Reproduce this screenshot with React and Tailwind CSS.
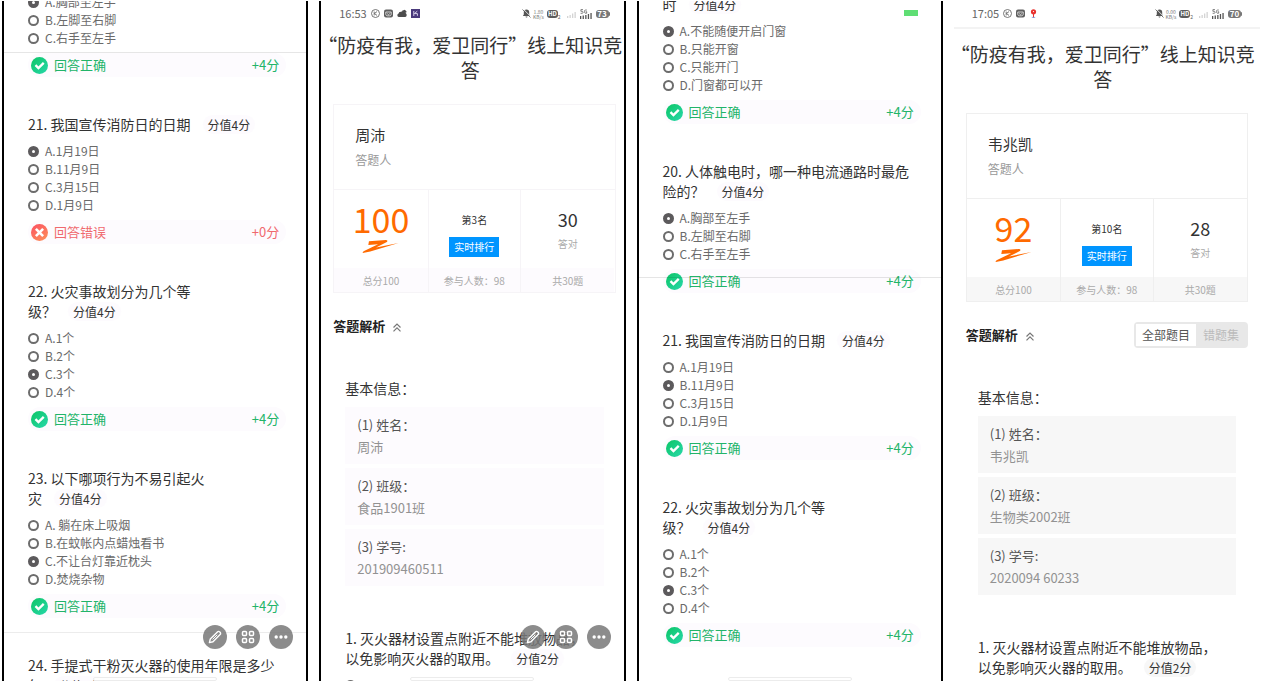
import React from "react";

const lilac = {
  soft: "bg-[#fdfbfe]",
  line: "border-[#f6f4f7]",
};
const gray = {
  soft: "bg-[#f7f7f7]",
  line: "border-[#efefef]",
};

function CheckIcon() {
  return (
    <svg className="size-[17px] shrink-0" viewBox="0 0 16 16" aria-hidden="true">
      <defs>
        <linearGradient id="okFill" x1="0" y1="0" x2="1" y2="1">
          <stop offset="0" stopColor="#0cc565" />
          <stop offset="1" stopColor="#28d8ab" />
        </linearGradient>
      </defs>
      <circle cx="8" cy="8" r="8" fill="url(#okFill)" />
      <path d="M4.2 7.6 7 10.4l5-4.900" fill="none" stroke="#fff" strokeWidth="2.2" />
    </svg>
  );
}

function CrossIcon() {
  return (
    <svg className="size-[17px] shrink-0" viewBox="0 0 16 16" aria-hidden="true">
      <defs>
        <linearGradient id="badFill" x1="0" y1="0" x2="0.6" y2="1">
          <stop offset="0" stopColor="#fb4f62" />
          <stop offset="1" stopColor="#fd8a5c" />
        </linearGradient>
      </defs>
      <circle cx="8" cy="8" r="8" fill="url(#badFill)" />
      <path d="M4.600 4.600l6.800 6.800M11.400 4.600l-6.800 6.800" fill="none" stroke="#fff" strokeWidth="2.400" />
    </svg>
  );
}

function Title({ lines, points, tone = lilac }) {
  return (
    <h3 className="whitespace-nowrap text-sm leading-5 text-[#333]">
      {lines.map((line, i) => (
        <React.Fragment key={line}>
          {i > 0 && <br />}
          {line}
        </React.Fragment>
      ))}
      <span className={`ml-3 rounded-full px-[5px] py-px text-xs ${tone.soft}`}>分值{points}分</span>
    </h3>
  );
}

function Options({ name, items, picked }) {
  return (
    <div className="mt-2">
      {items.map((text, i) => (
        <label key={text} className="flex h-[18px] items-center gap-1.5 whitespace-nowrap text-xs leading-[18px] text-[#6a6a6a]">
          <input
            type="radio"
            name={name}
            defaultChecked={i === picked}
            className="size-[11px] shrink-0 appearance-none rounded-full border-2 border-[#6c6c6c] bg-white checked:border-4 checked:border-[#5c5a5c]"
          />
          {text}
        </label>
      ))}
    </div>
  );
}

function Result({ ok = true, points }) {
  return (
    <div
      className={`mt-1.5 flex h-6 items-center gap-1.5 rounded-full pl-[3px] pr-[7px] text-[13px] ${lilac.soft} ${
        ok ? "text-[#22b469]" : "text-[#f0696e]"
      }`}
    >
      {ok ? <CheckIcon /> : <CrossIcon />}
      <span className="grow">{ok ? "回答正确" : "回答错误"}</span>
      <span>+{points}分</span>
    </div>
  );
}

function Question({ group, q }) {
  return (
    <section>
      {q.lines && <Title lines={q.lines} points={4} />}
      {q.options && <Options name={`${group}-${q.id}`} items={q.options} picked={q.picked} />}
      {q.options && <Result ok={q.ok !== false} points={q.ok === false ? 0 : 4} />}
    </section>
  );
}

const shock = ["A.胸部至左手", "B.左脚至右脚", "C.右手至左手"];
const dates = ["A.1月19日", "B.11月9日", "C.3月15日", "D.1月9日"];
const levels = {
  id: 22,
  lines: ["22. 火灾事故划分为几个等", "级？"],
  options: ["A.1个", "B.2个", "C.3个", "D.4个"],
  picked: 2,
};

const firstSheet = [
  { id: 20, options: shock, picked: 0 },
  { id: 21, lines: ["21. 我国宣传消防日的日期"], options: dates, picked: 0, ok: false },
  levels,
  {
    id: 23,
    lines: ["23. 以下哪项行为不易引起火", "灾"],
    options: ["A. 躺在床上吸烟", "B.在蚊帐内点蜡烛看书", "C.不让台灯靠近枕头", "D.焚烧杂物"],
    picked: 2,
  },
  { id: 24, lines: ["24. 手提式干粉灭火器的使用年限是多少", "年"] },
];

const secondSheet = [
  {
    id: 19,
    lines: ["时"],
    options: ["A.不能随便开启门窗", "B.只能开窗", "C.只能开门", "D.门窗都可以开"],
    picked: 0,
  },
  { id: 20, lines: ["20. 人体触电时，哪一种电流通路时最危", "险的？"], options: shock, picked: 0 },
  { id: 21, lines: ["21. 我国宣传消防日的日期"], options: dates, picked: 1 },
  levels,
];

function Phone({ children }) {
  return <article className="relative min-w-0 overflow-hidden border-x-2 border-black bg-white">{children}</article>;
}

function HomeBar() {
  return (
    <div className="absolute inset-x-0 bottom-0 flex justify-center">
      <div className="h-1 w-[124px] rounded-sm border border-[#ececec] bg-white" />
    </div>
  );
}

const fab = "flex size-6 items-center justify-center rounded-full bg-[#787878]/85";

function FloatingTools() {
  return (
    <div className="absolute bottom-8 right-[13px] flex gap-[9px]">
      <button type="button" aria-label="编辑" className={fab}>
        <svg className="size-4" viewBox="0 0 16 16" fill="none" stroke="#fff" strokeWidth="1.4" strokeLinejoin="round">
          <path d="M2.4 13.6l.9-3.6L10.4 2.9a1.6 1.6 0 0 1 2.3 0l.4.4a1.6 1.6 0 0 1 0 2.3L6 12.7z" />
          <path d="M5.6 10.4l4.6-4.6" strokeWidth="1" />
        </svg>
      </button>
      <button type="button" aria-label="应用" className={fab}>
        <svg className="size-4" viewBox="0 0 16 16" fill="none" stroke="#fff" strokeWidth="1.5">
          <rect x="2.5" y="2.5" width="4" height="4" rx="1" />
          <rect x="9.5" y="2.5" width="4" height="4" rx="1" />
          <rect x="2.5" y="9.5" width="4" height="4" rx="1" />
          <rect x="9.5" y="9.5" width="4" height="4" rx="1" />
        </svg>
      </button>
      <button type="button" aria-label="更多" className={fab}>
        <svg className="size-4" viewBox="0 0 16 16" fill="#fff">
          <circle cx="3.2" cy="8" r="1.7" />
          <circle cx="8" cy="8" r="1.7" />
          <circle cx="12.8" cy="8" r="1.7" />
        </svg>
      </button>
    </div>
  );
}

function StatusBar({ time, speed, battery, pin }) {
  return (
    <div className="flex h-[25px] items-center px-1.5 text-[11px] text-[#666]">
      <span>{time}</span>
      <svg className="ml-1 size-[9px]" viewBox="0 0 9 9" fill="none" stroke="#666">
        <circle cx="4.5" cy="4.5" r="4" strokeWidth=".9" />
        <path d="M3.2 2.6v3.8M6 2.6L3.4 4.5 6 6.4" strokeWidth=".9" />
      </svg>
      <svg className="ml-1 size-[9px]" viewBox="0 0 9 9">
        <rect y=".5" width="9" height="8" rx="2" fill="#5f5f5f" />
        <path d="M1.8 3h5.4v2.2c0 1-.8 1.6-1.6 1.6H3.4c-.8 0-1.6-.6-1.6-1.6zM3.2 4.6l1.3 1 1.3-1" fill="none" stroke="#fff" strokeWidth=".7" />
      </svg>
      {pin ? (
        <svg className="ml-1 size-[9px]" viewBox="0 0 9 9">
          <circle cx="4.5" cy="2.8" r="2.6" fill="#e8322f" />
          <path d="M4 5h1v3.4H4z" fill="#e8322f" />
          <circle cx="4.5" cy="2.6" r=".6" fill="#fff" />
          <path d="M2.8 8.4h3.4" stroke="#5b86d6" strokeWidth=".7" />
        </svg>
      ) : (
        <>
          <svg className="ml-1 h-[9px] w-2.5" viewBox="0 0 10 9">
            <path d="M1.8 8A1.8 1.8 0 0 1 1.6 4.5a2 2 0 0 1 2.4-1.6A2.6 2.6 0 0 1 8.6 4 2.2 2.2 0 0 1 8.2 8z" fill="#4c4c4c" />
            <path d="M5 1.8L7.8.8 9.6 2.4 9 4z" fill="#4c4c4c" />
          </svg>
          <svg className="ml-1 size-[9px]" viewBox="0 0 9 9">
            <rect width="9" height="9" fill="#4a3a7c" />
            <path d="M2.8 2v5M6.3 2.2L3.4 4.6h3v2.2" fill="none" stroke="#e6e0f5" strokeWidth=".9" />
          </svg>
        </>
      )}
      <span className="grow" />
      <svg className="size-[9px]" viewBox="0 0 9 9">
        <path d="M4.5.6a2.7 2.7 0 0 1 2.7 2.7V5.6l.9 1.3H.9l.9-1.3V3.3A2.7 2.7 0 0 1 4.5.6zM3.5 7.4h2a1 1 0 0 1-2 0z" fill="#555" />
        <path d="M1.4.2l7.4 7.4" stroke="#fff" strokeWidth=".8" />
        <path d="M.5.5l8 8" stroke="#555" strokeWidth=".8" />
      </svg>
      <span className="ml-0.5 text-center text-[5px] leading-[5px] text-[#777]">
        {speed}
        <br />
        KB/s
      </span>
      <span className="ml-[3px] rounded-[3px] bg-[#5c5c5c] px-px text-[6px] font-bold leading-2 text-white">HD</span>
      <span className="self-end pb-[7px] text-[5px] leading-[5px]">2</span>
      <svg className="ml-1.5 h-[9px] w-[9px]" viewBox="0 0 9 9" fill="#d4d4d4">
        <path d="M0 7h1.300v2H0zM2.500 6h1.300v3H2.500zM5 4.500h1.300V9H5zM7.500 3h1.300v6H7.500z" />
      </svg>
      <svg className="ml-1 h-2.5 w-3" viewBox="0 0 12 10">
        <path d="M0 7h1.300v3H0zM2.600 6.500h1.300V10H2.600zM5.200 6h1.300v4H5.200zM7.800 5h1.300v5H7.800zM10.400 4h1.300v6h-1.300z" fill="#555" />
        <path d="M3 .6H.9v1.700h1.300c1.200 0 1.200 2 0 2H.6M6.800 1H5.200c-.9 0-.9 3.200 0 3.200h1.500V2.700h-1" fill="none" stroke="#666" strokeWidth=".8" />
      </svg>
      <span className="ml-1 flex h-2 w-[13px] items-center justify-center rounded-[3px] bg-[#777] text-[8px] font-bold text-white">
        {battery}
      </span>
      <span className="h-1 w-px rounded-r bg-[#777]" />
    </div>
  );
}

function Swash() {
  return (
    <svg className="mt-[3px] h-[13px] w-[37px]" viewBox="0 0 111 40" fill="#ff6a00" aria-hidden="true">
      <path d="M20 4 72 0q8 1 3 6L42 23 111 9 24 35 1 40q-2-3 4-6L48 13 18 15z" />
    </svg>
  );
}

function ScoreCard({ name, score, rank, right, tone }) {
  const foot = `flex h-6 items-center justify-center whitespace-nowrap text-[10px] text-[#aaa] ${tone.soft}`;
  const cell = "flex h-[78px] flex-col items-center";
  return (
    <section className={`mt-[22px] border ${tone.line}`}>
      <div className={`border-b px-[21px] pb-5 pt-[19px] ${tone.line}`}>
        <p className="text-[15px] leading-[22px] text-[#333]">{name}</p>
        <p className="mt-[5px] text-xs leading-[18px] text-[#999]">答题人</p>
      </div>
      <div className="grid grid-cols-3">
        <div>
          <div className={`${cell} pt-[11px]`}>
            <strong className="text-[34px] font-normal leading-9 text-[#ff6a00]">{score}</strong>
            <Swash />
          </div>
          <p className={foot}>总分100</p>
        </div>
        <div className={`border-x ${tone.line}`}>
          <div className={`${cell} pt-[23px]`}>
            <span className="text-[10px] leading-[14px] text-[#333]">第{rank}名</span>
            <button type="button" className="mt-2.5 h-5 bg-[#0095ff] px-[5px] text-[10px] leading-5 text-white">
              实时排行
            </button>
          </div>
          <p className={foot}>参与人数：98</p>
        </div>
        <div>
          <div className={`${cell} pt-[19px]`}>
            <span className="text-lg leading-5 text-[#333]">{right}</span>
            <span className="mt-2 text-[10px] leading-[14px] text-[#aaa]">答对</span>
          </div>
          <p className={foot}>共30题</p>
        </div>
      </div>
    </section>
  );
}

function Report({ status, card, fields, tone, tabs, children }) {
  return (
    <>
      <StatusBar {...status} />
      {tabs && <div className="-mx-3 mb-[7px] mt-px h-0.5 bg-[#f3f3f3]" />}
      <h1
        className={`-ml-4 -mr-2 whitespace-nowrap text-center text-[19px] leading-[25px] text-[#333] ${
          tabs ? "pt-[5px]" : "pt-1.5"
        }`}
      >
        “防疫有我，爱卫同行”线上知识竞
        <br />答
      </h1>
      <ScoreCard {...card} tone={tone} />
      <div className="mt-5 flex h-[26px] items-center">
        <h2 className="text-[13px] font-bold text-[#222]">答题解析</h2>
        <button type="button" aria-label="收起" className="ml-2 mt-0.5">
          <svg className="h-[9px] w-2" viewBox="0 0 8 9" fill="none" stroke="#777" strokeWidth="1.2">
            <path d="M.5 4.5L4 1l3.500 3.500M.5 8.300L4 4.800l3.500 3.500" />
          </svg>
        </button>
        {tabs && (
          <div className="ml-auto flex h-[26px] rounded-sm bg-[#e8e8e8] p-0.5 text-xs">
            <button type="button" className="bg-white px-1.5 text-[#555]">
              全部题目
            </button>
            <button type="button" className="px-[7px] text-[#bbb]">
              错题集
            </button>
          </div>
        )}
      </div>
      <div className="mt-[39px] px-3">
        <h2 className="text-sm leading-5 text-[#333]">基本信息：</h2>
        <dl className="mt-[9px] flex flex-col gap-1 text-[13px] leading-5">
          {fields.map(([label, value]) => (
            <div key={label} className={`px-3 pb-[7px] pt-2 ${tone.soft}`}>
              <dt className="text-[#555]">{label}</dt>
              <dd className="mt-0.5 text-[#929292]">{value}</dd>
            </div>
          ))}
        </dl>
        <div className="mt-[42px]">
          <Title lines={["1. 灭火器材设置点附近不能堆放物品，", "以免影响灭火器的取用。"]} points={2} tone={tone} />
          {children}
        </div>
      </div>
    </>
  );
}

export default function App() {
  return (
    <main className="grid h-screen grid-cols-4 grid-rows-1 gap-[11px] overflow-hidden bg-white pb-1 pl-0.5 pr-3 pt-px font-['Noto_Sans_CJK_SC',sans-serif]">
      <Phone>
        <div className="-mt-4 flex flex-col gap-[37px] pl-6 pr-5">
          {firstSheet.map((q) => (
            <Question key={q.id} group="first" q={q} />
          ))}
        </div>
        <div className="absolute inset-x-0 top-[51px] h-px bg-[#e6e6e6]" />
        <div className="absolute inset-x-0 bottom-12 h-px bg-[#ececec]" />
        <HomeBar />
        <FloatingTools />
      </Phone>

      <Phone>
        <div className="pl-3 pr-2">
          <Report
            tone={lilac}
            status={{ time: "16:53", speed: "1.80", battery: 73 }}
            card={{ name: "周沛", score: 100, rank: 3, right: 30 }}
            fields={[
              ["(1) 姓名：", "周沛"],
              ["(2) 班级：", "食品1901班"],
              ["(3) 学号:", "201909460511"],
            ]}
          >
            <Options name="report-1" items={["A."]} />
          </Report>
        </div>
        <HomeBar />
        <FloatingTools />
      </Phone>

      <Phone>
        <div className="-mt-[7px] flex flex-col gap-[37px] pl-6 pr-5">
          {secondSheet.map((q) => (
            <Question key={q.id} group="second" q={q} />
          ))}
        </div>
        <div className="absolute right-[23px] top-[9px] h-1.5 w-3.5 bg-[#5fde74]" />
        <div className="absolute inset-x-0 top-[276px] h-px bg-black/10" />
        <HomeBar />
      </Phone>

      <article className="min-w-0 overflow-hidden px-3">
        <Report
          tabs
          tone={gray}
          status={{ time: "17:05", speed: "0.00", battery: 70, pin: true }}
          card={{ name: "韦兆凯", score: 92, rank: 10, right: 28 }}
          fields={[
            ["(1) 姓名：", "韦兆凯"],
            ["(2) 班级：", "生物类2002班"],
            ["(3) 学号:", "2020094 60233"],
          ]}
        />
      </article>
    </main>
  );
}
